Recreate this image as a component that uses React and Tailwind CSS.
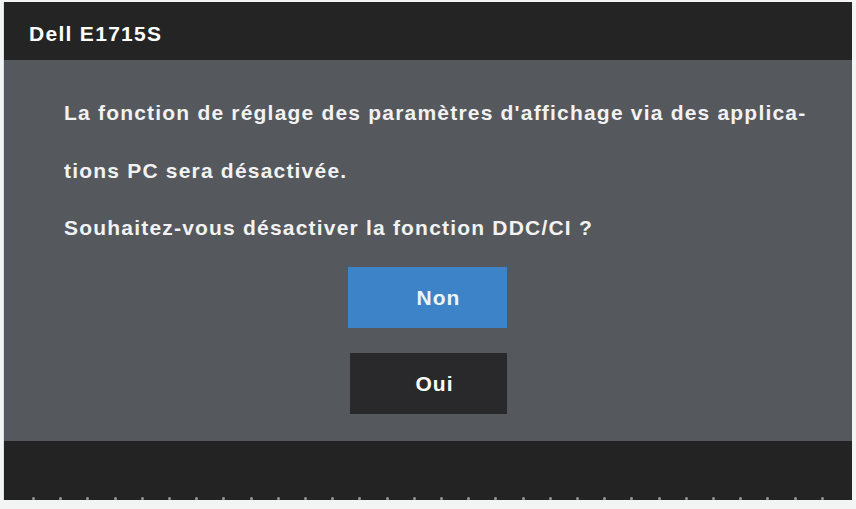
const FONT = { fontFamily: '"Liberation Sans", Arial, sans-serif' };

function Ticks() {
  // little light marks along the bottom edge of the frame
  return (
    <div className="flex justify-between px-[28px] h-[3px] -mt-[3px]">
      {Array.from({ length: 30 }).map((_, i) => (
        <span key={i} className="w-[3px] h-[3px] rounded-full bg-[#9a9a9a]" />
      ))}
    </div>
  );
}

export default function App() {
  return (
    <div className="w-[856px] h-[509px] bg-[#f3f5f5] pt-[2px] pl-[3px]" style={FONT}>
      <div className="w-[849px] h-[498px] flex flex-col border-l border-[#cfe3ea]">
        <div className="h-[58px] bg-[#242424] flex items-center pl-[25px] pt-[6px]">
          <span className="text-white font-bold text-[21px] tracking-[1.3px]">Dell E1715S</span>
        </div>

        <div className="flex-1 bg-[#55585c] flex flex-col pl-[60px] pt-[42px] text-[#f2f2f2] font-bold text-[21px] leading-[22px] tracking-[1.2px]">
          <p>La fonction de réglage des paramètres d'affichage via des applica-</p>
          <p className="mt-[36px]">tions PC sera désactivée.</p>
          <p className="mt-[35px]">Souhaitez-vous désactiver la fonction DDC/CI ?</p>

          <div className="flex flex-col items-start pl-[284px] mt-[28px] gap-[25px] tracking-[1px]">
            <button className="w-[159px] h-[61px] bg-[#3c83c7] text-[#eef4fa] font-bold text-[21px] pl-[22px]">
              Non
            </button>
            <button className="w-[157px] h-[61px] bg-[#29292b] text-white font-bold text-[21px] pl-[12px] ml-[2px]">
              Oui
            </button>
          </div>
        </div>

        <div className="h-[59px] bg-[#232323]" />
        <Ticks />
      </div>
    </div>
  );
}
